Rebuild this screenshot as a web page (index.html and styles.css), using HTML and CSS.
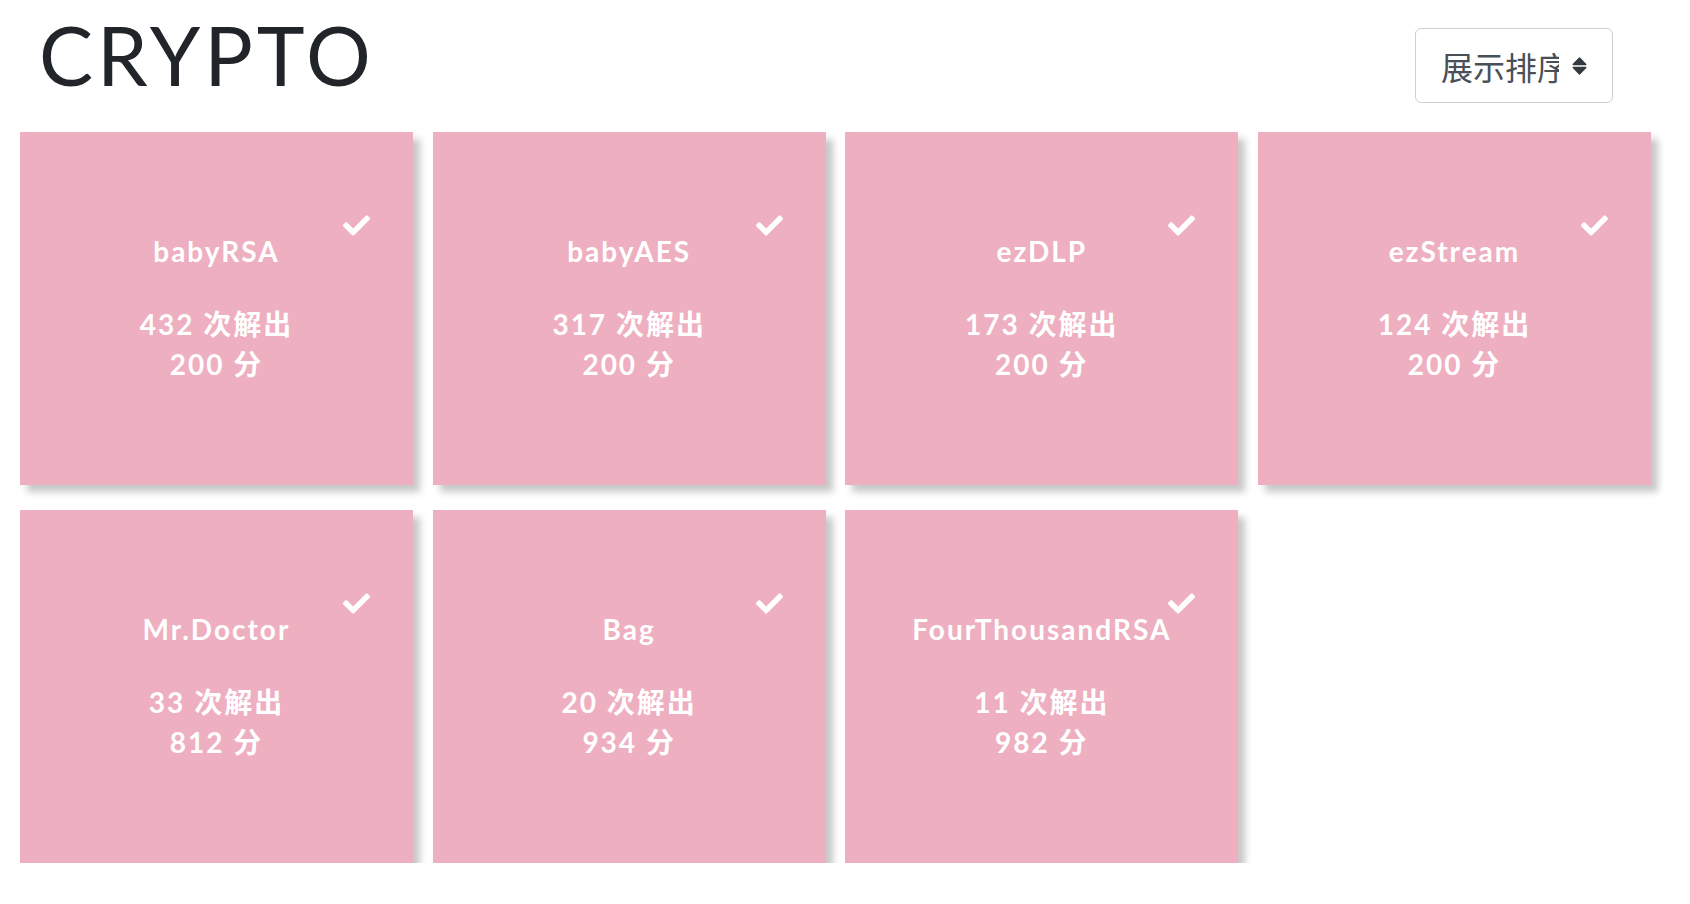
FILE: index.html
```html
<!DOCTYPE html>
<html lang="zh">
<head>
<meta charset="utf-8">
<title>CRYPTO</title>
<link rel="stylesheet" href="styles.css">
</head>
<body>
<header class="top">
  <h1 class="title">CRYPTO</h1>
  <button class="sort-btn" type="button">
    <span class="sort-label">展示排序</span>
    <svg class="sort-icon" viewBox="0 0 15 18" width="15" height="18" aria-hidden="true">
      <path d="M1.2 7.6 L7.5 1 L13.8 7.6 Z" fill="#343a40" stroke="#343a40" stroke-width="1.4" stroke-linejoin="round"/>
      <path d="M1.2 10.4 L7.5 17 L13.8 10.4 Z" fill="#343a40" stroke="#343a40" stroke-width="1.4" stroke-linejoin="round"/>
    </svg>
  </button>
</header>
<main class="grid">
  <div class="card"><svg class="check" viewBox="0 66 512 380"><path d="M173.898 439.404l-166.4-166.4c-9.997-9.997-9.997-26.206 0-36.204l36.203-36.204c9.997-9.998 26.207-9.998 36.204 0L192 312.69 432.095 72.596c9.997-9.997 26.207-9.997 36.204 0l36.203 36.204c9.997 9.997 9.997 26.206 0 36.204l-294.4 294.401c-9.998 9.997-26.207 9.997-36.204-.001z"/></svg><p class="name">babyRSA</p><p class="stats">432 次解出<br>200 分</p></div>
  <div class="card"><svg class="check" viewBox="0 66 512 380"><path d="M173.898 439.404l-166.4-166.4c-9.997-9.997-9.997-26.206 0-36.204l36.203-36.204c9.997-9.998 26.207-9.998 36.204 0L192 312.69 432.095 72.596c9.997-9.997 26.207-9.997 36.204 0l36.203 36.204c9.997 9.997 9.997 26.206 0 36.204l-294.4 294.401c-9.998 9.997-26.207 9.997-36.204-.001z"/></svg><p class="name">babyAES</p><p class="stats">317 次解出<br>200 分</p></div>
  <div class="card"><svg class="check" viewBox="0 66 512 380"><path d="M173.898 439.404l-166.4-166.4c-9.997-9.997-9.997-26.206 0-36.204l36.203-36.204c9.997-9.998 26.207-9.998 36.204 0L192 312.69 432.095 72.596c9.997-9.997 26.207-9.997 36.204 0l36.203 36.204c9.997 9.997 9.997 26.206 0 36.204l-294.4 294.401c-9.998 9.997-26.207 9.997-36.204-.001z"/></svg><p class="name">ezDLP</p><p class="stats">173 次解出<br>200 分</p></div>
  <div class="card"><svg class="check" viewBox="0 66 512 380"><path d="M173.898 439.404l-166.4-166.4c-9.997-9.997-9.997-26.206 0-36.204l36.203-36.204c9.997-9.998 26.207-9.998 36.204 0L192 312.69 432.095 72.596c9.997-9.997 26.207-9.997 36.204 0l36.203 36.204c9.997 9.997 9.997 26.206 0 36.204l-294.4 294.401c-9.998 9.997-26.207 9.997-36.204-.001z"/></svg><p class="name">ezStream</p><p class="stats">124 次解出<br>200 分</p></div>
  <div class="card"><svg class="check" viewBox="0 66 512 380"><path d="M173.898 439.404l-166.4-166.4c-9.997-9.997-9.997-26.206 0-36.204l36.203-36.204c9.997-9.998 26.207-9.998 36.204 0L192 312.69 432.095 72.596c9.997-9.997 26.207-9.997 36.204 0l36.203 36.204c9.997 9.997 9.997 26.206 0 36.204l-294.4 294.401c-9.998 9.997-26.207 9.997-36.204-.001z"/></svg><p class="name">Mr.Doctor</p><p class="stats">33 次解出<br>812 分</p></div>
  <div class="card"><svg class="check" viewBox="0 66 512 380"><path d="M173.898 439.404l-166.4-166.4c-9.997-9.997-9.997-26.206 0-36.204l36.203-36.204c9.997-9.998 26.207-9.998 36.204 0L192 312.69 432.095 72.596c9.997-9.997 26.207-9.997 36.204 0l36.203 36.204c9.997 9.997 9.997 26.206 0 36.204l-294.4 294.401c-9.998 9.997-26.207 9.997-36.204-.001z"/></svg><p class="name">Bag</p><p class="stats">20 次解出<br>934 分</p></div>
  <div class="card"><svg class="check" viewBox="0 66 512 380"><path d="M173.898 439.404l-166.4-166.4c-9.997-9.997-9.997-26.206 0-36.204l36.203-36.204c9.997-9.998 26.207-9.998 36.204 0L192 312.69 432.095 72.596c9.997-9.997 26.207-9.997 36.204 0l36.203 36.204c9.997 9.997 9.997 26.206 0 36.204l-294.4 294.401c-9.998 9.997-26.207 9.997-36.204-.001z"/></svg><p class="name">FourThousandRSA</p><p class="stats">11 次解出<br>982 分</p></div>
</main>
</body>
</html>
```

FILE: styles.css
```css
* { box-sizing: border-box; }

html, body {
  margin: 0;
  padding: 0;
  background: #ffffff;
}

body {
  font-family: "Lato", "Noto Sans CJK SC", sans-serif;
  color: #212529;
}

.top {
  display: flex;
  justify-content: space-between;
  align-items: flex-start;
  height: 132px;
  padding: 7px 77px 0 39px;
}

.title {
  margin: 0;
  font-family: "Lato", sans-serif;
  font-weight: 400;
  font-size: 81px;
  line-height: 96px;
  letter-spacing: 4px;
  color: #212529;
}

.sort-btn {
  margin-top: 21px;
  height: 75px;
  display: flex;
  align-items: center;
  padding: 0 25px;
  background: #ffffff;
  border: 1px solid #ccd0d5;
  border-radius: 6px;
  font-family: "Noto Sans CJK SC", sans-serif;
  color: #495057;
}

.sort-label {
  display: block;
  width: 118px;
  overflow: hidden;
  white-space: nowrap;
  font-size: 32px;
  line-height: 48px;
}

.sort-icon {
  display: block;
  margin-left: 13px;
  flex: none;
}

.grid {
  display: grid;
  grid-template-columns: repeat(4, 393px);
  grid-auto-rows: 353px;
  column-gap: 19.67px;
  row-gap: 25px;
  padding-left: 20px;
}

.card {
  position: relative;
  background: #eeafc0;
  box-shadow: 7px 7px 7px rgba(0, 0, 0, 0.22);
  display: flex;
  flex-direction: column;
  align-items: center;
  justify-content: center;
  padding-bottom: 2px;
  color: #ffffff;
  font-weight: 700;
  font-size: 28px;
  letter-spacing: 2px;
  text-align: center;
}

.card p {
  margin: 0;
  line-height: 40px;
}

.card .name {
  margin-bottom: 33px;
}

.check {
  position: absolute;
  top: 83px;
  right: 43px;
  width: 27px;
  height: 21px;
  fill: #ffffff;
}
```
